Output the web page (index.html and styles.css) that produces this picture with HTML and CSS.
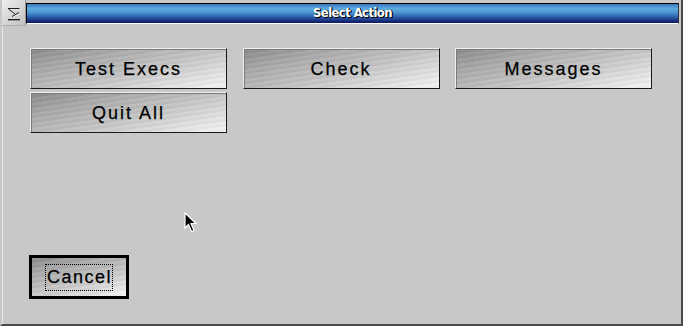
FILE: index.html
```
<!DOCTYPE html>
<html>
<head>
<meta charset="utf-8">
<link rel="stylesheet" href="styles.css">
</head>
<body>
<div class="window">
  <div class="titlebar">
    <div class="close">
      <svg width="26" height="26" viewBox="0 0 26 26">
        <path d="M8 8.5 H19.5 M8.5 9 L15 14 M12 16.5 L19 12.5" stroke="#e8e8e8" stroke-width="1" fill="none" transform="translate(1,1)"/>
        <path d="M8 8.5 H19.5 M8.5 9 L15 14 M12 16.5 L19 12.5" stroke="#202020" stroke-width="1" fill="none"/>
        <path d="M8 19.5 H20" stroke="#202020" stroke-width="1"/>
        <path d="M8 20.5 H20" stroke="#909090" stroke-width="1"/>
      </svg>
    </div>
    <div class="title"><span class="title-text">Select Action</span></div>
  </div>
  <div class="content">
    <div class="grid">
      <button class="btn">Test Execs</button>
      <button class="btn">Check</button>
      <button class="btn">Messages</button>
      <button class="btn">Quit All</button>
    </div>
    <div class="footer">
      <button class="btn cancel"><span class="focus">Cancel</span></button>
    </div>
  </div>
  <svg class="cursor" width="14" height="22" viewBox="0 0 14 22">
    <path d="M1 1 L1 16 L4.5 12.5 L7.5 19.5 L10 18.5 L7 11.5 L12 11.5 Z" fill="#000" stroke="#fff" stroke-width="1.2" stroke-linejoin="miter"/>
  </svg>
</div>
</body>
</html>
```
FILE: styles.css
```
html, body {
  margin: 0;
  padding: 0;
  background: #c8c8c8;
}
.window {
  position: relative;
  width: 683px;
  height: 326px;
  box-sizing: border-box;
  background: #c8c8c8;
  border-left: 2px solid #c8c8c8;
  box-shadow: inset 1px 0 0 #e6e6e6;
  border-right: 2px solid #4a4a4a;
  border-bottom: 2px solid #4a4a4a;
  display: flex;
  flex-direction: column;
  overflow: hidden;
}
.titlebar {
  display: flex;
  height: 26px;
  margin-left: -2px;
  flex: none;
}
.close {
  width: 25px;
  height: 25px;
  background: linear-gradient(135deg, #f0f0f0, #d4d4d4 60%, #c0c0c0);
  border-right: 1px solid #9a9a9a;
  border-bottom: 1px solid #b0b0b0;
}
.close svg { display: block; }
.title {
  flex: 1;
  margin-top: 3px;
  margin-right: 2px;
  height: 21px;
  box-sizing: border-box;
  border-top: 1px solid #000;
  border-left: 1px solid #000;
  border-bottom: 1px solid #ffffff;
  border-right: 1px solid #303030;
  background: linear-gradient(to bottom, #3a78c0 0%, #5cacde 25%, #4c94cf 45%, #2a5aa8 70%, #182a78 90%, #10185a 100%);
  display: flex;
  align-items: center;
  justify-content: center;
}
.title-text {
  font-family: "DejaVu Sans Condensed", "DejaVu Sans", sans-serif;
  font-weight: bold;
  font-size: 13px;
  color: #ffffff;
  letter-spacing: -0.6px;
  text-shadow: 1px 1px 0 #000, 1px 0 0 #000;
  margin-top: -3px;
}
.content {
  flex: 1;
  display: flex;
  flex-direction: column;
  padding: 22px 0 25px 28px;
}
.grid {
  display: grid;
  grid-template-columns: 197px 197px 197px;
  grid-auto-rows: 41px;
  column-gap: 15.5px;
  row-gap: 3px;
}
.btn {
  box-sizing: border-box;
  margin: 0;
  padding: 0;
  font-family: "Liberation Sans", Arial, sans-serif;
  font-size: 18px;
  letter-spacing: 2px;
  -webkit-text-stroke: 0.25px #000;
  color: #000;
  border: 1px solid;
  border-color: #efefef #1a1a1a #1a1a1a #efefef;
  box-shadow: inset 1px 1px 0 #7a7a7a;
  background:
    repeating-linear-gradient(172deg, rgba(255,255,255,0.05) 0px, rgba(255,255,255,0.05) 2px, rgba(0,0,0,0.03) 3px, rgba(0,0,0,0.03) 5px),
    linear-gradient(165deg, #8a8a8a 0%, #a8a8a8 25%, #c4c4c4 55%, #e0e0e0 80%, #f6f6f6 100%);
  display: flex;
  align-items: center;
  justify-content: center;
  padding-top: 1px;
}
.footer {
  margin-top: auto;
  display: flex;
}
.cancel {
  width: 100px;
  height: 44px;
  margin-left: -1px;
  border: 3px solid #000;
  box-shadow: none;
  letter-spacing: 1.5px;
}
.focus {
  border: 1px dotted #000;
  padding: 2px 0 2px 1px;
}
.cursor {
  position: absolute;
  left: 182px;
  top: 212px;
}
```
